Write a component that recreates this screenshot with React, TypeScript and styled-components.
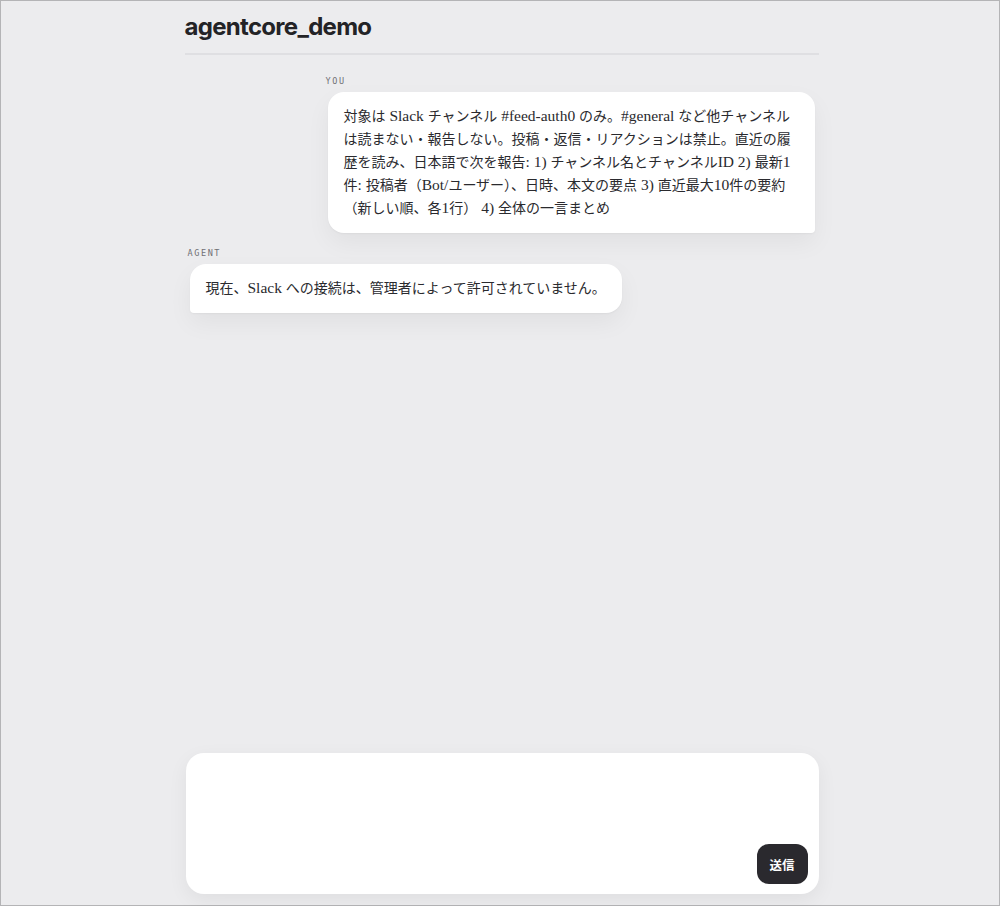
import React from "react";
import styled, { createGlobalStyle } from "styled-components";

const GlobalStyle = createGlobalStyle`
  html, body {
    margin: 0;
    padding: 0;
    height: 100%;
    background: #ececee;
  }
  #root {
    height: 100%;
  }
  * {
    box-sizing: border-box;
  }
`;

type Role = "user" | "agent";

type Message = {
  role: Role;
  text: string;
};

const messages: Message[] = [
  {
    role: "user",
    text:
      "対象は Slack チャンネル #feed-auth0 のみ。#general など他チャンネルは読まない・報告しない。投稿・返信・リアクションは禁止。直近の履歴を読み、日本語で次を報告: 1) チャンネル名とチャンネルID 2) 最新1件: 投稿者（Bot/ユーザー）、日時、本文の要点 3) 直近最大10件の要約（新しい順、各1行） 4) 全体の一言まとめ",
  },
  {
    role: "agent",
    text: "現在、Slack への接続は、管理者によって許可されていません。",
  },
];

// latin runs are set a touch larger than the CJK text around them
function renderRuns(text: string) {
  return text
    .split(/([\x20-\x7E]+)/)
    .map((part, i) => (i % 2 === 1 ? <Latin key={i}>{part}</Latin> : part));
}

function App() {
  return (
    <>
      <GlobalStyle />
      <Frame>
        <Column>
          <Header>
            <Title>agentcore_demo</Title>
          </Header>
          <MessageList>
            {messages.map((m, i) => (
              <MessageGroup key={i} $role={m.role}>
                <RoleLabel>{m.role === "user" ? "YOU" : "AGENT"}</RoleLabel>
                <Bubble $role={m.role}>{renderRuns(m.text)}</Bubble>
              </MessageGroup>
            ))}
          </MessageList>
          <Composer>
            <TextArea aria-label="message" />
            <SendButton type="button">送信</SendButton>
          </Composer>
        </Column>
      </Frame>
    </>
  );
}

export default App;

const Frame = styled.div`
  height: 100%;
  border: 1px solid #b4b4b6;
  display: flex;
  justify-content: center;
`;

const Column = styled.div`
  width: 634px;
  margin-left: 3px;
  height: 100%;
  display: flex;
  flex-direction: column;
  padding-bottom: 11px;
`;

const Header = styled.header`
  padding: 11px 0 11px 0;
  border-bottom: 2px solid #dfdfe2;
`;

const Title = styled.h1`
  margin: 0;
  font-family: Inter, "Liberation Sans", sans-serif;
  font-weight: 700;
  font-size: 24px;
  line-height: 30px;
  letter-spacing: -0.7px;
  color: #232326;
`;

const MessageList = styled.main`
  flex: 1;
  display: flex;
  flex-direction: column;
  gap: 14px;
  padding: 20px 4px 0 3px;
`;

const MessageGroup = styled.div<{ $role: Role }>`
  display: flex;
  flex-direction: column;
  align-items: flex-start;
  align-self: ${({ $role }) => ($role === "user" ? "flex-end" : "flex-start")};
  max-width: 489px;
  gap: 5px;
`;

const RoleLabel = styled.div`
  font-family: "DejaVu Sans Mono", "Liberation Mono", monospace;
  font-size: 8.5px;
  line-height: 12px;
  letter-spacing: 1.6px;
  color: #707075;
`;

const Bubble = styled.div<{ $role: Role }>`
  background: #ffffff;
  margin-left: 2px;
  padding: 13px 16px;
  font-family: "Liberation Serif", "Noto Sans CJK JP", serif;
  font-size: 14px;
  line-height: 23px;
  color: #2a2a2e;
  border-radius: ${({ $role }) =>
    $role === "user" ? "16px 16px 4px 16px" : "16px 16px 16px 4px"};
  box-shadow: 0 10px 24px rgba(0, 0, 0, 0.05), 0 1px 2px rgba(0, 0, 0, 0.04);
`;

const Latin = styled.span`
  font-size: 15.5px;
  line-height: 20px;
`;

const Composer = styled.div`
  position: relative;
  height: 141px;
  margin-left: 1px;
  background: #ffffff;
  border-radius: 18px;
  box-shadow: 0 6px 20px rgba(0, 0, 0, 0.06);
  display: flex;
  align-items: flex-end;
  justify-content: flex-end;
  padding: 0 11px 10px 16px;
`;

const TextArea = styled.textarea`
  position: absolute;
  inset: 14px 80px 14px 16px;
  border: none;
  outline: none;
  resize: none;
  background: transparent;
  font-family: "Liberation Serif", "Noto Sans CJK JP", serif;
  font-size: 15px;
`;

const SendButton = styled.button`
  width: 51px;
  height: 40px;
  border: none;
  border-radius: 12px;
  background: #2a292e;
  color: #ffffff;
  font-family: "Noto Sans CJK JP", sans-serif;
  font-weight: 700;
  font-size: 12.5px;
  cursor: pointer;
`;
